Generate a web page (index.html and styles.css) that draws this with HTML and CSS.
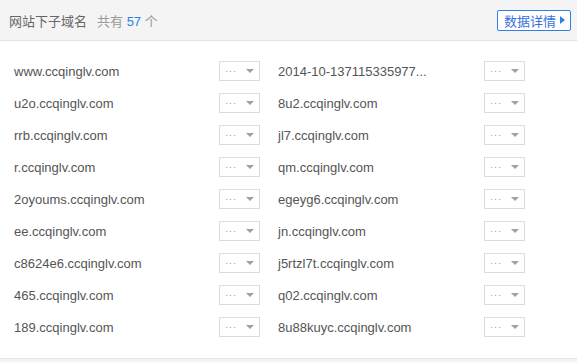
FILE: index.html
```html
<!DOCTYPE html>
<html lang="zh-CN">
<head>
    <meta charset="UTF-8">
    <title>网站下子域名</title>
    <link rel="stylesheet" href="styles.css">
</head>
<body>
    <div class="panel">
        <div class="panel-head">
            <span class="title">网站下子域名</span>
            <span class="total">共有 <em>57</em> 个</span>
            <a class="more" href="#">数据详情<i class="arrow"></i></a>
        </div>
        <ul class="domains">
            <li><span class="name">www.ccqinglv.com</span><span class="pick"><b>···</b><i></i></span></li>
            <li><span class="name" title="2014-10-1371153359772.ccqinglv.com">2014-10-137115335977...</span><span class="pick"><b>···</b><i></i></span></li>
            <li><span class="name">u2o.ccqinglv.com</span><span class="pick"><b>···</b><i></i></span></li>
            <li><span class="name">8u2.ccqinglv.com</span><span class="pick"><b>···</b><i></i></span></li>
            <li><span class="name">rrb.ccqinglv.com</span><span class="pick"><b>···</b><i></i></span></li>
            <li><span class="name">jl7.ccqinglv.com</span><span class="pick"><b>···</b><i></i></span></li>
            <li><span class="name">r.ccqinglv.com</span><span class="pick"><b>···</b><i></i></span></li>
            <li><span class="name">qm.ccqinglv.com</span><span class="pick"><b>···</b><i></i></span></li>
            <li><span class="name">2oyoums.ccqinglv.com</span><span class="pick"><b>···</b><i></i></span></li>
            <li><span class="name">egeyg6.ccqinglv.com</span><span class="pick"><b>···</b><i></i></span></li>
            <li><span class="name">ee.ccqinglv.com</span><span class="pick"><b>···</b><i></i></span></li>
            <li><span class="name">jn.ccqinglv.com</span><span class="pick"><b>···</b><i></i></span></li>
            <li><span class="name">c8624e6.ccqinglv.com</span><span class="pick"><b>···</b><i></i></span></li>
            <li><span class="name">j5rtzl7t.ccqinglv.com</span><span class="pick"><b>···</b><i></i></span></li>
            <li><span class="name">465.ccqinglv.com</span><span class="pick"><b>···</b><i></i></span></li>
            <li><span class="name">q02.ccqinglv.com</span><span class="pick"><b>···</b><i></i></span></li>
            <li><span class="name">189.ccqinglv.com</span><span class="pick"><b>···</b><i></i></span></li>
            <li><span class="name">8u88kuyc.ccqinglv.com</span><span class="pick"><b>···</b><i></i></span></li>
        </ul>
        <div class="panel-foot"></div>
    </div>
</body>
</html>
```

FILE: styles.css
```css
body {
    margin: 0;
    padding: 0;
    background-color: #ffffff;
    font-family: "Liberation Sans", Arial, "Noto Sans CJK SC", sans-serif;
    font-size: 13px;
}
.panel-head {
    display: flex;
    align-items: center;
    height: 40px;
    padding: 0 6px 0 9px;
    background-color: #f4f4f4;
    border-bottom: 1px solid #e3e3e3;
}
.title {
    color: #666;
}
.total {
    margin-left: 10px;
    color: #999;
}
.total em {
    font-style: normal;
    color: #2f7fe8;
}
.more {
    margin-left: auto;
    display: flex;
    align-items: center;
    height: 19px;
    padding: 0 5px 0 6px;
    border: 1px solid #2f7fe8;
    border-radius: 2px;
    background: #fff;
    color: #3a6fe0;
    text-decoration: none;
}
.more .arrow {
    margin-left: 4px;
    border-left: 5px solid #2f7fe8;
    border-top: 4px solid transparent;
    border-bottom: 4px solid transparent;
}
.domains {
    list-style: none;
    margin: 0;
    padding: 20px 0 21px 14px;
    display: grid;
    grid-template-columns: 246px 247px;
    column-gap: 18px;
    row-gap: 12px;
}
.domains li {
    display: flex;
    align-items: center;
    justify-content: space-between;
    height: 20px;
}
.name {
    color: #555;
    white-space: nowrap;
}
.pick {
    display: flex;
    align-items: center;
    justify-content: space-between;
    box-sizing: border-box;
    width: 41px;
    height: 20px;
    padding: 0 5px;
    border: 1px solid #dcdcdc;
    background: #fff;
}
.pick b {
    font-weight: normal;
    font-size: 9px;
    line-height: 10px;
    letter-spacing: 1px;
    color: #8a93a8;
}
.pick i {
    border-top: 4px solid #a0a0a0;
    border-left: 4px solid transparent;
    border-right: 4px solid transparent;
}
.panel-foot {
    height: 4px;
    background-color: #f4f4f4;
    border-top: 1px solid #e3e3e3;
}
```
